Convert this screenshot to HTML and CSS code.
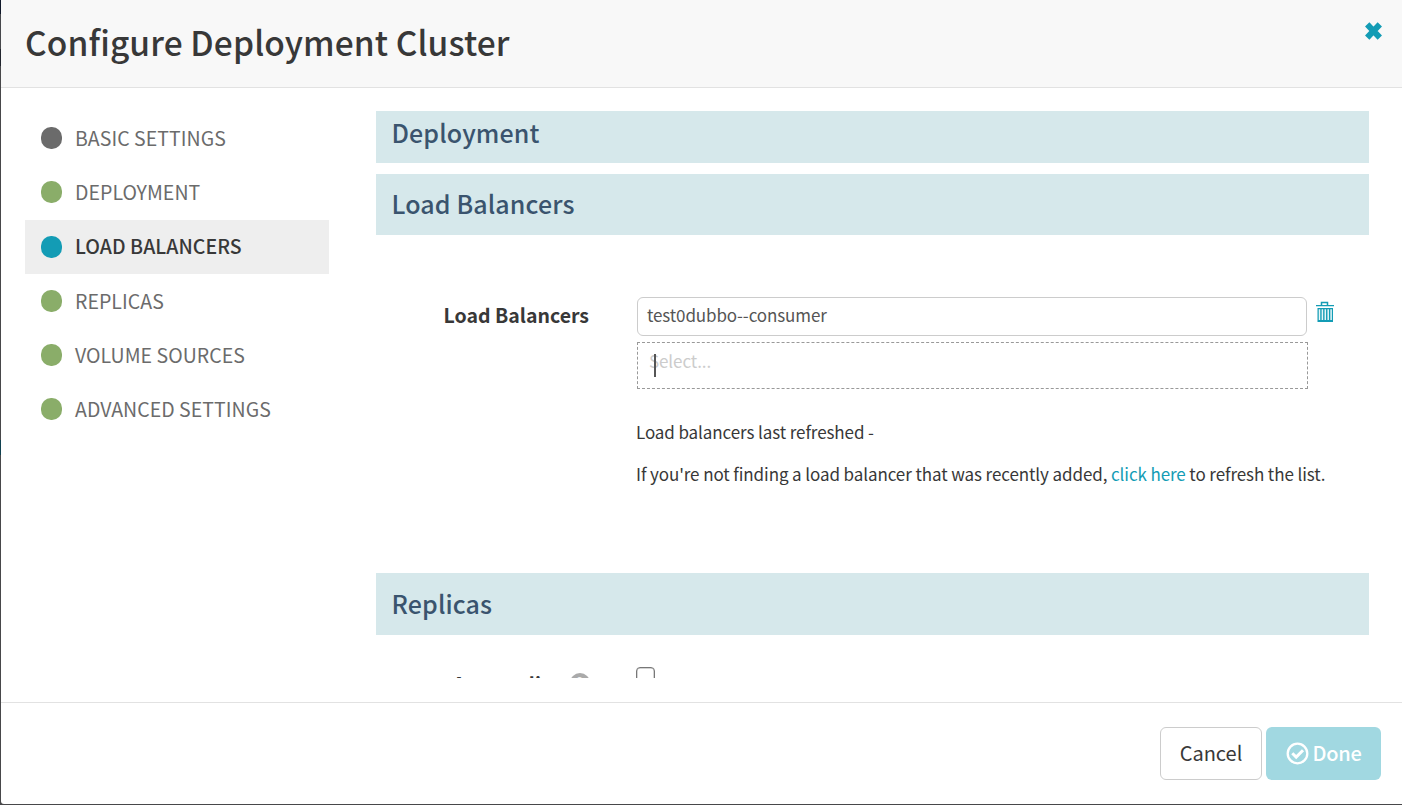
FILE: index.html
```html
<!DOCTYPE html>
<html lang="en">
<head>
<meta charset="utf-8">
<title>Configure Deployment Cluster</title>
<link rel="stylesheet" href="styles.css">
</head>
<body>
<div class="modal">
  <header class="modal-header">
    <h1 class="modal-title"><span>Configure Deployment Cluster</span></h1>
    <button class="close" aria-label="Close"><svg width="20" height="20" viewBox="0 0 20 20"><path d="M3.2 3.4 15.8 16.6M15.8 3.4 3.2 16.6" stroke="currentColor" stroke-width="6" fill="none"/></svg></button>
  </header>
  <div class="modal-body">
    <nav class="steps">
      <a class="step visited"><i class="dot"></i><span>BASIC SETTINGS</span></a>
      <a class="step"><i class="dot"></i><span>DEPLOYMENT</span></a>
      <a class="step active"><i class="dot"></i><span>LOAD BALANCERS</span></a>
      <a class="step"><i class="dot"></i><span>REPLICAS</span></a>
      <a class="step"><i class="dot"></i><span>VOLUME SOURCES</span></a>
      <a class="step"><i class="dot"></i><span>ADVANCED SETTINGS</span></a>
    </nav>
    <main class="content">
      <h2 class="section clipped"><span>Deployment</span></h2>
      <h2 class="section"><span>Load Balancers</span></h2>
      <div class="form">
        <div class="label"><span>Load Balancers</span></div>
        <div class="fields">
          <div class="row">
            <div class="input"><span>test0dubbo--consumer</span></div>
            <svg class="trash" width="18" height="22" viewBox="0 0 18 22"><path d="M5.5 4V1.5h6V4" fill="none" stroke="currentColor" stroke-width="1.5"/><path d="M0 4h18v1.2H0zM1.5 7h15.5v14H1.5z" fill="currentColor"/><path d="M3.5 8.3v10.7M6.4 8.3v10.7M9.3 8.3v10.7M12.2 8.3v10.7M15.1 8.3v10.7" stroke="#e8f6f8" stroke-width="1.5"/></svg>
          </div>
          <div class="select"><span>Select...</span><i class="caret"></i></div>
          <p class="note first"><span>Load balancers last refreshed -</span></p>
          <p class="note"><span>If you're not finding a load balancer that was recently added, <a>click here</a> to refresh the list.</span></p>
        </div>
      </div>
      <h2 class="section replicas"><span>Replicas</span></h2>
      <div class="scaling">
        <div class="scaling-label">Autoscaling</div>
        <i class="help">?</i>
        <i class="check"></i>
      </div>
    </main>
  </div>
  <footer class="modal-footer">
    <button class="btn cancel"><span>Cancel</span></button>
    <button class="btn done"><svg width="23" height="23" viewBox="0 0 23 23" fill="none" stroke="#fff"><circle cx="11.5" cy="11.5" r="9.8" stroke-width="2.3"/><path d="M6.3 11.3 10.2 15.1 17 8.3" stroke-width="3"/></svg><span>Done</span></button>
  </footer>
</div>
</body>
</html>
```
FILE: styles.css
```css
* { box-sizing: border-box; }
body {
  margin: 0;
  width: 1402px;
  height: 805px;
  overflow: hidden;
  background: linear-gradient(#10182a 0 14px, #47484c 14px 49px, #22262e 49px 66px, #48484a 66px 440px, #104150 440px 455px, #48484a 455px);
  font-family: "Noto Sans CJK SC", "Open Sans", sans-serif;
  color: #383838;
}
h1, h2, p { margin: 0; }
span { white-space: nowrap; }
button { font-family: inherit; padding: 0; }
.modal {
  margin-left: 1px;
  height: 804px;
  background: #fff;
  border-bottom-left-radius: 3px;
  display: flex;
  flex-direction: column;
}
.modal-header {
  height: 88px;
  flex: none;
  background: #f8f8f8;
  border-bottom: 1px solid #e2e2e2;
  display: flex;
  justify-content: space-between;
  padding: 0 18px 0 24px;
}
.modal-title { font-size: 33.5px; font-weight: 500; line-height: 84px; letter-spacing: 0.1px; }
.close {
  margin-top: 21px;
  width: 20px;
  height: 20px;
  border: 0;
  background: none;
  color: #139cb5;
}
.close svg, .btn svg { display: block; }
.modal-body {
  height: 614px;
  flex: none;
  display: flex;
  padding: 23px 33px 24px 24px;
}
.steps { width: 304px; margin-right: 47px; padding-top: 0.5px; }
.step {
  display: flex;
  align-items: center;
  height: 54.25px;
  padding: 0 0 1px 16px;
  font-size: 19.5px;
  line-height: 50px;
  letter-spacing: 0.05px;
  color: #6b6b6b;
}
.step span { padding-bottom: 0.7px; }
.dot {
  width: 21px;
  height: 22px;
  border-radius: 10px;
  background: #8aad69;
  margin-right: 13px;
}
.visited .dot { background: #6b6b6b; }
.active { background: #eee; color: #383838; font-weight: 500; }
.active .dot { background: #139cb5; }
.content { width: 993px; overflow: hidden; }
.section {
  height: 61px;
  padding-left: 15.5px;
  background: #d6e8eb;
  color: #3a546e;
  font-size: 25px;
  font-weight: 500;
  line-height: 59px;
  letter-spacing: 0.12px;
}
.clipped { height: 52px; line-height: 42px; margin-bottom: 11px; }
.form {
  display: flex;
  height: 338px;
  padding-top: 62px;
}
.label {
  width: 213px;
  margin-right: 48px;
  text-align: right;
  font-size: 19.5px;
  font-weight: 700;
  line-height: 36px;
}
.fields { flex: 1; }
.row { display: flex; gap: 9px; }
.input {
  width: 670px;
  height: 39px;
  border: 1px solid #ccc;
  border-radius: 6px;
  padding-left: 9px;
  font-size: 17px;
  line-height: 34px;
  letter-spacing: -0.12px;
  color: #555;
}
.trash { margin-top: 4px; color: #139cb5; }
.select {
  position: relative;
  width: 671px;
  height: 47px;
  margin-top: 6px;
  border: 1px dashed #999;
  padding-left: 11px;
  font-size: 17px;
  line-height: 36px;
  letter-spacing: -0.1px;
  color: #ccc;
}
.caret {
  position: absolute;
  left: 16px;
  top: 11px;
  width: 2px;
  height: 23px;
  background: #555;
}
.note { font-size: 17px; line-height: 42px; letter-spacing: -0.095px; margin-left: -1px; }
.note a { color: #139cb5; }
.first { margin-top: 22px; }
.replicas { height: 62px; line-height: 61px; }
.scaling {
  display: flex;
  align-items: flex-start;
  padding-top: 32px;
}
.scaling-label {
  width: 189px;
  text-align: right;
  font-size: 19.5px;
  font-weight: 700;
  line-height: 34px;
}
.help {
  width: 20px;
  height: 20px;
  margin: 6px 46.5px 0 4.5px;
  border-radius: 50%;
  background: #aaa;
  color: #fff;
  font: 700 15px/20px "Noto Sans CJK SC", sans-serif;
  text-align: center;
}
.check {
  width: 19px;
  height: 19px;
  border: 1.5px solid #777;
  border-radius: 4px;
  box-shadow: inset 0 0 0 0.5px #aaa;
}
.modal-footer {
  flex: 1;
  border-top: 1px solid #e2e2e2;
  display: flex;
  justify-content: flex-end;
  gap: 4px;
  padding: 24px 21px 0 0;
}
.btn {
  height: 53px;
  border-radius: 6px;
  font-size: 20px;
  line-height: 50px;
  display: flex;
  justify-content: center;
}
.cancel { width: 102px; border: 1px solid #ccc; background: #fff; color: #383838; }
.done { width: 115px; border: 0; background: #a1d8e1; color: #fff; font-weight: 500; gap: 4px; line-height: 52px; letter-spacing: -0.3px; }
.done svg { margin-top: 14.5px; }
```
